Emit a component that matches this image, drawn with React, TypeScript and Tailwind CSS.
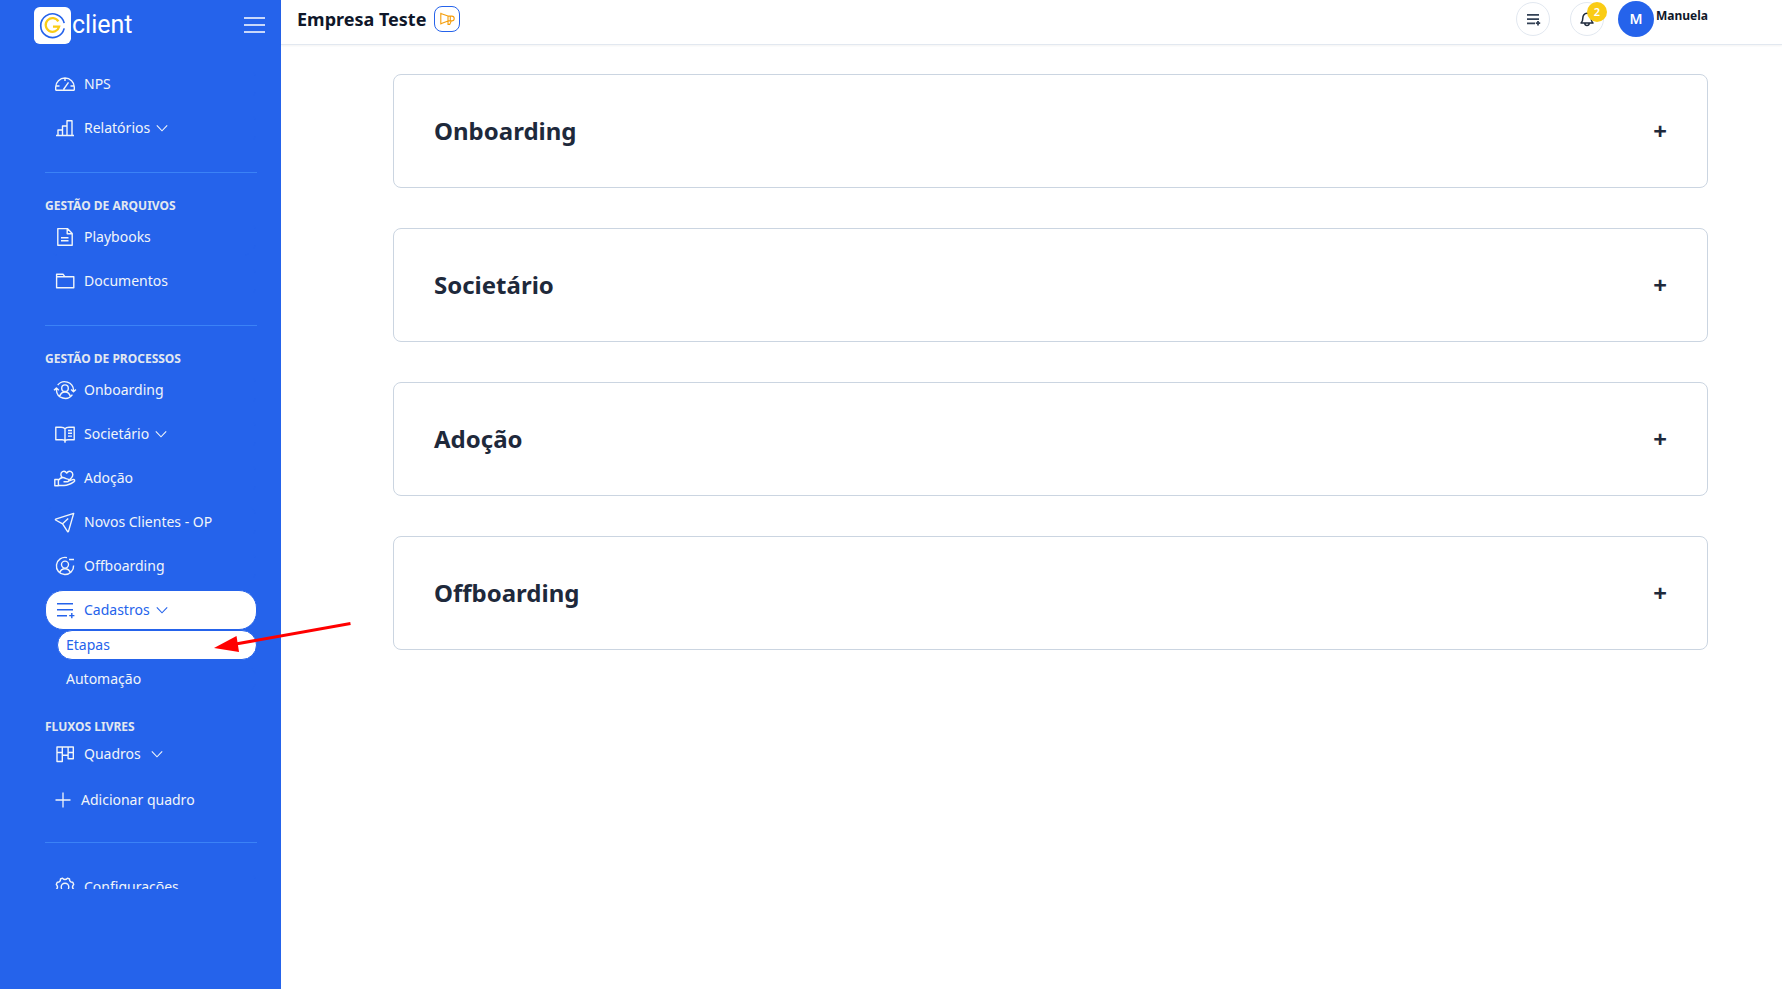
import React from "react";

type IconProps = { children: React.ReactNode };

const Icon = ({ children }: IconProps) => (
  <svg
    viewBox="0 0 22 22"
    className="size-[22px] shrink-0 overflow-visible"
    fill="none"
    stroke="currentColor"
    strokeWidth="1.4"
    strokeLinejoin="round"
    aria-hidden="true"
  >
    {children}
  </svg>
);

const Chevron = () => (
  <svg viewBox="0 0 12 12" className="size-3 shrink-0" fill="none" stroke="currentColor" strokeWidth="1.1" aria-hidden="true">
    <path d="M.8 3.3 6 8.8l5.2-5.5" />
  </svg>
);

const icons = {
  gauge: (
    <Icon>
      <path d="M1.7 16.3v-2.3a9.3 9 0 0 1 18.6 0v2.8q0 .4-.4.4H2.1q-.4 0-.4-.4zM11 5v3M2 13h3.5M16.5 13H20M9.5 16.500l5-7.200" />
    </Icon>
  ),
  bars: (
    <Icon>
      <path d="M2 18.5h18M4 18.5V13h4.5v5.5M8.5 18.5V9H13v9.5M13 18.5V3.7h5v14.8" />
    </Icon>
  ),
  file: (
    <Icon>
      <path d="M3.8 2.6h9.6l4.8 5v11.6H3.8zM13.2 2.6v5.2h5M7 11.7h7.5M7 14.7h7.5" />
    </Icon>
  ),
  folder: (
    <Icon>
      <path d="M2.6 17.7V4.2H9l1.8 2.5h9v11zM2.6 6.7h8.2" />
    </Icon>
  ),
  userCycle: (
    <Icon>
      <circle cx="11" cy="9.2" r="3.3" />
      <path d="M5.6 17.8c.7-3 2.8-4.8 5.4-4.800s4.700 1.800 5.400 4.800M3.700 6.200A8.800 8.800 0 0 1 19.500 11.200v1.300M18.400 15.600A8.800 8.800 0 0 1 2.400 11V9.500M0 11.300l2.400-2.300 2.400 2.300M17.100 10.500l2.400 2.300 2.400-2.300" />
    </Icon>
  ),
  book: (
    <Icon>
      <path d="M11 5.800C10 4.600 8.600 4.200 7 4.200H1.800v12.500H8c1.500 0 3 .5 3 1.800 0-1.300 1.500-1.800 3-1.800h6.200V4.200H15c-1.600 0-3 .4-4 1.600zM11 5.800v14M14 7.500h4M14 10.300h4M14 13.100h4" />
    </Icon>
  ),
  heartHand: (
    <Icon>
      <path d="M.8 12.500h3.600v6.200H.8zM4.400 13.500C5.600 11.500 7 10.500 9 10.500c1.800 0 2.200 1.400 4 1.400 2.200 0 2.600 2.600.4 2.800H9.500M13.800 14.400l4.800-1.800c2-.7 2.900 1.200 1.200 2.300-3 2-6.400 3.600-9.800 3.600H4.400M8 10.200c-1.800-2-1.300-4.700.5-5.600 1.700-.8 3.300 0 4.200 1.500.9-1.500 2.700-2.300 4.400-1.500 2.400 1.200 2 4.300.4 6.100l-3 3" />
    </Icon>
  ),
  send: (
    <Icon>
      <path d="M19.700 2.400 1.600 8.200q-.5.4 0 .8l7 3.800 5 7.800q.5.4.8 0zM8.600 12.800l5.600-5.200" />
    </Icon>
  ),
  userMinus: (
    <Icon>
      <circle cx="11" cy="9.600" r="3.500" />
      <path d="M5.500 18c.8-2.700 2.700-4.300 5.500-4.300s4.700 1.600 5.500 4.300M13 2.600A8.600 8.600 0 1 0 19.600 10.500M15 4.500h5" />
    </Icon>
  ),
  listAdd: (
    <Icon>
      <path d="M3 4.700h16M3 10.800h16M3 16.800h10M17.800 14v5.200M15.200 16.600h5.200" />
    </Icon>
  ),
  board: (
    <Icon>
      <path d="M3 4h16.300v11.700h-5.200V12.300H8.300v6.200H3zM3 9.500h5.300M8.300 4v8.300M14.100 4v8.300M14.100 9.500h5.200" />
    </Icon>
  ),
  gear: (
    <Icon>
      <circle cx="11" cy="11" r="3.800" />
      <path d="M8.500 2.200Q11 4.700 13.500 2.200L15.500 3q0 3.300 3.300 3.300l.9 2.200q-2.400 2.500 0 5l-.9 2.200q-3.300 0-3.300 3.300l-2 .8q-2.500-2.500-5 0l-2-.8q0-3.300-3.300-3.300l-.9-2.200q2.400-2.500 0-5l.9-2.200Q6.500 6.300 6.500 3z" />
    </Icon>
  ),
};

type ItemProps = { icon: keyof typeof icons; label: string; expandable?: boolean; active?: boolean };

const itemBase = "flex h-10 w-full items-center gap-2 rounded-[18px] border border-[#2563eb] px-2 text-left text-sm";

const NavItem = ({ icon, label, expandable, active }: ItemProps) => {
  const cls = active ? `${itemBase} bg-white text-[#2563eb]` : `${itemBase} text-[#f1f5f9]`;
  const content = (
    <>
      {icons[icon]}
      <span className="flex items-center gap-1.5">
        {label}
        {expandable && <Chevron />}
      </span>
    </>
  );
  return (
    <li>
      {expandable ? (
        <button type="button" aria-expanded={!!active} className={cls}>
          {content}
        </button>
      ) : (
        <a href="#" className={cls}>
          {content}
        </a>
      )}
    </li>
  );
};

const Heading = ({ children }: { children: React.ReactNode }) => (
  <h2 className="text-xs font-bold text-[#e2e8f0]">{children}</h2>
);

const Sidebar = () => (
  <aside className="flex w-[281px] shrink-0 flex-col bg-[#2563eb]">
    <div className="flex h-[50px] shrink-0 items-center justify-between pr-4 pl-[34px]">
      <a href="#" className="flex items-center gap-px">
        <svg viewBox="0 0 38 38" className="size-[37px]" fill="none" aria-hidden="true">
          <rect width="38" height="38" rx="6" fill="#fff" />
          <path d="M31 16.500a12.200 12.200 0 1 0 0 5.500" stroke="#2563eb" strokeWidth="1.700" />
          <path d="M25 14.800a7 7 0 1 0 .8 5.400h-6.300" stroke="#facc15" strokeWidth="2.300" />
        </svg>
        <span className="font-[Roboto,sans-serif] text-[25px] leading-8 text-white">client</span>
      </a>
      <button type="button" aria-label="Menu" className="text-white">
        <svg viewBox="0 0 21 18" className="h-[18px] w-[21px]" stroke="currentColor" strokeWidth="1.600" aria-hidden="true">
          <path d="M0 2h21M0 9h21M0 16h21" />
        </svg>
      </button>
    </div>
    <nav className="mb-[100px] min-h-0 flex-1 overflow-hidden pt-3.5 pr-6 pl-[45px]">
      <ul className="space-y-1">
        <NavItem icon="gauge" label="NPS" />
        <NavItem icon="bars" label="Relatórios" expandable />
      </ul>
      <hr className="mt-6 mb-[25px] border-[#3b82f6]" />
      <Heading>GESTÃO DE ARQUIVOS</Heading>
      <ul className="mt-[3px] space-y-1">
        <NavItem icon="file" label="Playbooks" />
        <NavItem icon="folder" label="Documentos" />
      </ul>
      <hr className="mt-6 mb-[25px] border-[#3b82f6]" />
      <Heading>GESTÃO DE PROCESSOS</Heading>
      <ul className="mt-[3px] space-y-1">
        <NavItem icon="userCycle" label="Onboarding" />
        <NavItem icon="book" label="Societário" expandable />
        <NavItem icon="heartHand" label="Adoção" />
        <NavItem icon="send" label="Novos Clientes - OP" />
        <NavItem icon="userMinus" label="Offboarding" />
        <NavItem icon="listAdd" label="Cadastros" expandable active />
      </ul>
      <ul className="space-y-1 pl-3 text-sm">
        <li>
          <a href="#" className="flex h-[30px] items-center rounded-2xl border border-[#2563eb] bg-white px-2 text-[#2563eb]">
            Etapas
          </a>
        </li>
        <li>
          <a href="#" className="flex h-[30px] items-center rounded-2xl border border-[#2563eb] px-2 text-[#f1f5f9]">
            Automação
          </a>
        </li>
      </ul>
      <div className="mt-[25px]">
        <Heading>FLUXOS LIVRES</Heading>
      </div>
      <button type="button" className="-mt-px flex h-10 w-full items-center gap-2 px-[9px] text-sm text-[#f1f5f9]">
        {icons.board}
        <span className="flex items-center gap-2.5">
          Quadros
          <Chevron />
        </span>
      </button>
      <button type="button" className="mt-1.5 flex h-10 w-full items-center gap-[9px] px-[9px] text-sm text-[#f1f5f9]">
        <svg viewBox="0 0 18 18" className="size-[18px]" stroke="currentColor" strokeWidth="1.300" aria-hidden="true">
          <path d="M9 1.500v15M1.500 9h15" />
        </svg>
        Adicionar quadro
      </button>
      <hr className="mt-[22px] mb-6 border-[#3b82f6]" />
      <ul>
        <NavItem icon="gear" label="Configurações" />
      </ul>
    </nav>
  </aside>
);

const TopBar = () => (
  <header className="flex h-[45px] shrink-0 items-start justify-between border-b border-[#e2e8f0] pr-[74px] pl-4 shadow-xs">
    <div className="flex h-[38px] items-center gap-2">
      <h1 className="text-lg font-bold text-[#0f172a]">Empresa Teste</h1>
      <button type="button" aria-label="Novidades" className="grid size-[26px] place-items-center rounded-lg border border-[#2563eb] text-[#f59e0b]">
        <svg viewBox="0 0 16 16" className="size-4" fill="none" stroke="currentColor" strokeWidth="1.100" strokeLinejoin="round" aria-hidden="true">
          <path d="M1.800 1.800v11.600M1.800 2.400l7.200 2.700h3.800a2.300 2.300 0 0 1 0 4.800H9l-7.200 2.900M9 5.100v8.300h1.800l1.500-3.500M11.300 5.100v4.800" />
        </svg>
      </button>
    </div>
    <div className="flex h-[38px] items-center">
      <button type="button" aria-label="Lista" className="mr-5 grid size-[34px] place-items-center rounded-full border border-[#e2e8f0] text-[#334155]">
        <svg viewBox="0 0 16 16" className="size-4" stroke="currentColor" strokeWidth="1.800" aria-hidden="true">
          <path d="M2 3.900h12M2 8.100h12M2 12.400h8M13 10v4.400M10.800 12.200h4.400" />
        </svg>
      </button>
      <button type="button" aria-label="Notificações" className="relative mr-3.5 grid size-[34px] place-items-center rounded-full border border-[#e2e8f0] text-[#1e293b]">
        <svg viewBox="0 0 16 16" className="size-4" fill="none" stroke="currentColor" strokeWidth="1.500" strokeLinejoin="round" aria-hidden="true">
          <path d="M2 12c1.200-1 1.800-2.200 1.800-4.800C3.800 4.300 5.400 2.300 8 2.300s4.200 2 4.200 4.900c0 2.600.6 3.800 1.800 4.800zM5.800 12.500c.2 2.600 4.200 2.600 4.400 0" />
        </svg>
        <span className="absolute -top-px -right-1 grid size-5 place-items-center rounded-full bg-[#facc15] text-[11px] font-semibold text-white">2</span>
      </button>
      <button type="button" className="flex h-[38px] items-start">
        <span className="mr-0.5 grid size-9 place-items-center self-center rounded-full bg-[#2563eb] text-sm font-semibold text-white">M</span>
        <span className="pt-2 text-xs leading-4 font-bold text-[#0f172a]">Manuela</span>
      </button>
    </div>
  </header>
);

const stages = ["Onboarding", "Societário", "Adoção", "Offboarding"];

export default function App() {
  return (
    <div className="relative flex h-screen overflow-hidden bg-white font-['Noto_Sans',sans-serif]">
      <Sidebar />
      <div className="flex min-w-0 flex-1 flex-col">
        <TopBar />
        <main className="flex flex-col gap-10 pt-[29px] pr-[74px] pl-28">
          {stages.map((s) => (
            <section key={s} className="rounded-lg border border-[#cbd5e1]">
              <button type="button" aria-expanded="false" className="flex w-full items-center justify-between p-10 text-2xl font-bold text-[#1e293b]">
                <span>{s}</span>
                <span>+</span>
              </button>
            </section>
          ))}
        </main>
      </div>
      <svg viewBox="0 0 138 32" className="pointer-events-none absolute top-[621px] left-[213px] h-8 w-[138px]" aria-hidden="true">
        <path d="M137.500 2.500 20 23.500" stroke="#f00" strokeWidth="3" />
        <path d="M1 27 23.500 15 26 31z" fill="#f00" />
      </svg>
    </div>
  );
}
